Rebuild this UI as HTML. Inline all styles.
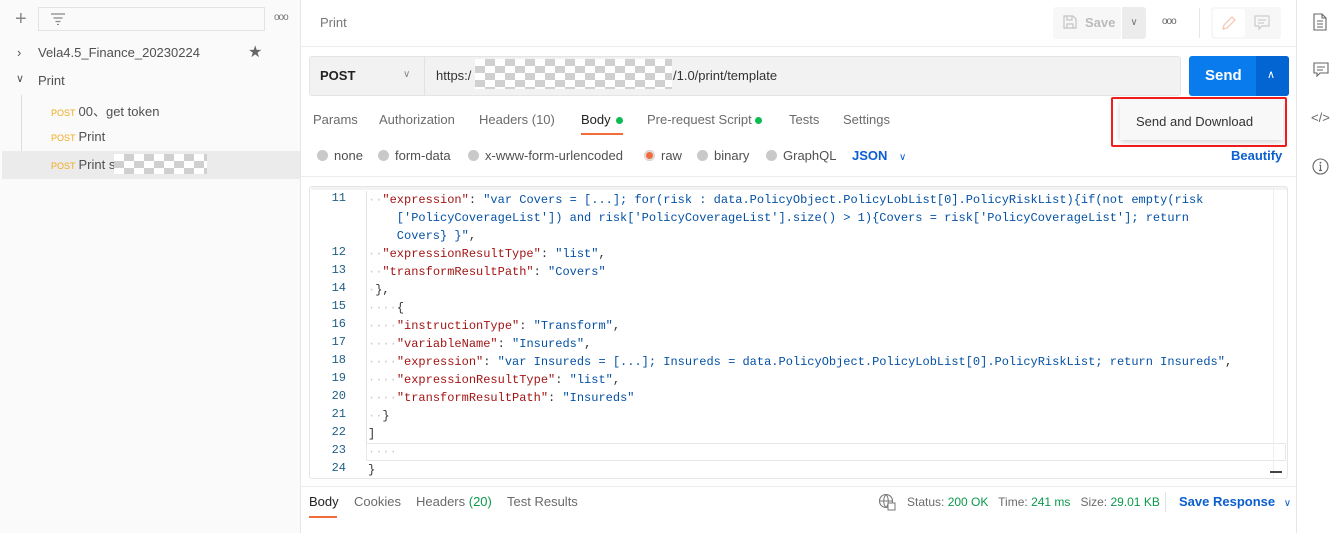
<!DOCTYPE html>
<html><head><meta charset="utf-8"><style>
*{box-sizing:border-box;margin:0;padding:0}
body{width:1332px;height:533px;overflow:hidden;background:#fff;font-family:"Liberation Sans",Arial,sans-serif;font-size:13px;color:#505050;position:relative}
.abs{position:absolute}
.chk{background-color:#fff;background-image:conic-gradient(#d0d0d0 25%,#fff 0 50%,#d0d0d0 0 75%,#fff 0);background-size:20px 14px}
.side{left:0;top:0;width:301px;height:533px;background:#fafafa;border-right:1px solid #e6e6e6}
.post{color:#f0ab1c;font-size:9px;margin-right:3px}
.code{font-family:"Liberation Mono",monospace;font-size:12px;line-height:18px;white-space:pre}
.ln{position:absolute;left:310px;width:36px;text-align:right;color:#1f5f86;font-family:"Liberation Mono",monospace;font-size:12px}
.k{color:#a31515}.s{color:#0451a5}.d{color:#c8c8c8}.p{color:#333}
.tab{position:absolute;top:112px;color:#6b6b6b}
.rad{position:absolute;top:148px;color:#505050}
.rad i{display:inline-block;width:11px;height:11px;border-radius:50%;background:#c9c9c9;margin-right:6px;vertical-align:-1px}
</style></head><body>
<div class="abs side"></div>
<div class="abs" style="left:15px;top:8px;font-size:20px;color:#888;font-weight:300">+</div>
<div class="abs" style="left:38px;top:7px;width:227px;height:24px;border:1px solid #e3e3e3;background:#fafafa"></div>
<svg class="abs" style="left:50px;top:13px" width="16" height="12"><path d="M1 1h14M3.5 5h9M5.5 8.5h5M7 11.5h2" stroke="#888" stroke-width="1.2"/></svg>
<div class="abs" style="left:274px;top:12px;font-size:10px;color:#777;letter-spacing:-1px">ooo</div>
<div class="abs" style="left:17px;top:45px;color:#555">›</div>
<div class="abs" style="left:38px;top:45px;color:#505050">Vela4.5_Finance_20230224</div>
<div class="abs" style="left:248px;top:42px;color:#666;font-size:16px">★</div>
<div class="abs" style="left:16px;top:72px;color:#555;font-size:11px">∨</div>
<div class="abs" style="left:38px;top:73px">Print</div>
<div class="abs" style="left:21px;top:95px;width:1px;height:84px;background:#ddd"></div>
<div class="abs" style="left:51px;top:101px"><span class="post">POST</span>00、get token</div>
<div class="abs" style="left:51px;top:129px"><span class="post">POST</span>Print</div>
<div class="abs" style="left:2px;top:151px;width:298px;height:28px;background:#ebebeb"></div>
<div class="abs" style="left:51px;top:157px"><span class="post">POST</span>Print s</div>
<div class="abs chk" style="left:114px;top:154px;width:93px;height:20px"></div>

<div class="abs" style="left:320px;top:15px;color:#777">Print</div>
<div class="abs" style="left:301px;top:46px;width:995px;height:1px;background:#ececec"></div>
<div class="abs" style="left:1053px;top:7px;width:68px;height:32px;background:#f7f7f7;border-radius:3px;color:#bbb;font-weight:bold;padding:8px 0 0 32px">Save</div>
<svg class="abs" style="left:1062px;top:14px" width="16" height="16"><path d="M2 2h9l3 3v9H2z M5 2v4h5V2 M5 14v-4h6v4" fill="none" stroke="#c4c4c4" stroke-width="1.2"/></svg>
<div class="abs" style="left:1122px;top:7px;width:24px;height:32px;background:#ececec;border-radius:0 3px 3px 0;color:#777;font-size:10px;text-align:center;padding-top:10px">∨</div>
<div class="abs" style="left:1162px;top:16px;font-size:10px;color:#666;letter-spacing:-1px">ooo</div>
<div class="abs" style="left:1199px;top:8px;width:1px;height:30px;background:#e6e6e6"></div>
<div class="abs" style="left:1211px;top:7px;width:70px;height:32px;background:#f7f7f7;border-radius:3px"></div>
<div class="abs" style="left:1213px;top:9px;width:32px;height:28px;background:#fff;border-radius:3px"></div>
<svg class="abs" style="left:1220px;top:14px" width="18" height="18"><path d="M3 15l1-4 8-8 3 3-8 8z" fill="none" stroke="#f5c4b0" stroke-width="1.2"/></svg>
<svg class="abs" style="left:1253px;top:14px" width="18" height="18"><path d="M2 2h14v10H9l-3 3v-3H2z M5 6h8M5 9h6" fill="none" stroke="#ccc" stroke-width="1.2"/></svg>

<div class="abs" style="left:309px;top:56px;width:872px;height:40px;background:#f2f2f2;border:1px solid #e5e5e5;border-radius:3px"></div>
<div class="abs" style="left:424px;top:57px;width:1px;height:38px;background:#e2e2e2"></div>
<div class="abs" style="left:320px;top:68px;color:#222;font-weight:bold">POST</div>
<div class="abs" style="left:403px;top:69px;color:#888;font-size:10px">∨</div>
<div class="abs" style="left:436px;top:68px;color:#333">https:/</div>
<div class="abs chk" style="left:475px;top:59px;width:197px;height:30px"></div>
<div class="abs" style="left:673px;top:68px;color:#333">/1.0/print/template</div>
<div class="abs" style="left:1189px;top:56px;width:100px;height:40px;background:#097bed;border-radius:3px"></div>
<div class="abs" style="left:1256px;top:56px;width:33px;height:40px;background:#0265d2;border-radius:0 3px 3px 0"></div>
<div class="abs" style="left:1205px;top:67px;color:#fff;font-weight:bold;font-size:15px">Send</div>
<div class="abs" style="left:1267px;top:68px;color:#fff;font-size:11px">∧</div>

<div class="abs" style="left:1111px;top:97px;width:176px;height:50px;border:2px solid #f31d1d;border-radius:2px"></div>
<div class="abs" style="left:1120px;top:100px;width:163px;height:40px;background:#f8f8f8;box-shadow:0 2px 6px rgba(0,0,0,.18)"></div>
<div class="abs" style="left:1136px;top:114px;color:#333">Send and Download</div>

<div class="tab" style="left:313px">Params</div>
<div class="tab" style="left:379px">Authorization</div>
<div class="tab" style="left:479px">Headers (10)</div>
<div class="tab" style="left:581px;color:#222">Body <span style="display:inline-block;width:7px;height:7px;border-radius:50%;background:#0cbb52;margin-left:2px"></span></div>
<div class="abs" style="left:581px;top:133px;width:42px;height:2px;background:#f26b3a"></div>
<div class="tab" style="left:647px">Pre-request Script <span style="display:inline-block;width:7px;height:7px;border-radius:50%;background:#0cbb52"></span></div>
<div class="tab" style="left:789px">Tests</div>
<div class="tab" style="left:843px">Settings</div>

<div class="rad" style="left:317px"><i></i>none</div>
<div class="rad" style="left:378px"><i></i>form-data</div>
<div class="rad" style="left:468px"><i></i>x-www-form-urlencoded</div>
<div class="rad" style="left:644px"><i style="background:#f26b3a;box-shadow:0 0 0 2px #ddd inset"></i>raw</div>
<div class="rad" style="left:697px"><i></i>binary</div>
<div class="rad" style="left:766px"><i></i>GraphQL</div>
<div class="rad" style="left:852px;color:#0b5fcf;font-weight:bold">JSON <span style="font-weight:normal;font-size:10px;margin-left:8px">∨</span></div>
<div class="rad" style="left:1231px;color:#0b5fcf;font-weight:bold">Beautify</div>

<div class="abs" style="left:301px;top:176px;width:995px;height:1px;background:#ececec"></div>
<div class="abs" style="left:309px;top:186px;width:979px;height:293px;border:1px solid #e6e6e6;border-radius:3px;overflow:hidden">
<div class="abs" style="left:1px;top:0;width:977px;height:3px;background:#f3f3f3"></div>
<div class="abs" style="left:56px;top:256px;width:920px;height:18px;border:1px solid #e8e8e8"></div>
<div class="abs" style="left:963px;top:0;width:1px;height:293px;background:#eee"></div>
<div class="abs" style="left:960px;top:284px;width:12px;height:2px;background:#444"></div>
</div>
<div class="abs" style="left:301px;top:486px;width:995px;height:1px;background:#ececec"></div>

<div class="ln" style="top:191px">11</div>
<div class="ln" style="top:245px">12</div>
<div class="ln" style="top:263px">13</div>
<div class="ln" style="top:281px">14</div>
<div class="ln" style="top:299px">15</div>
<div class="ln" style="top:317px">16</div>
<div class="ln" style="top:335px">17</div>
<div class="ln" style="top:353px">18</div>
<div class="ln" style="top:371px">19</div>
<div class="ln" style="top:389px">20</div>
<div class="ln" style="top:407px">21</div>
<div class="ln" style="top:425px">22</div>
<div class="ln" style="top:443px">23</div>
<div class="ln" style="top:461px">24</div>
<div class="abs" style="left:366px;top:191px;width:1px;height:252px;background:#e2e2e2"></div>

<div class="abs code" style="left:368px;top:191px"><span class="d">··</span><span class="k">"expression"</span><span class="p">: </span><span class="s">"var Covers = [...]; for(risk : data.PolicyObject.PolicyLobList[0].PolicyRiskList){if(not empty(risk</span>
<span class="s">    ['PolicyCoverageList']) and risk['PolicyCoverageList'].size() &gt; 1){Covers = risk['PolicyCoverageList']; return </span>
<span class="s">    Covers} }"</span><span class="p">,</span>
<span class="d">··</span><span class="k">"expressionResultType"</span><span class="p">: </span><span class="s">"list"</span><span class="p">,</span>
<span class="d">··</span><span class="k">"transformResultPath"</span><span class="p">: </span><span class="s">"Covers"</span>
<span class="d">·</span><span class="p">},</span>
<span class="d">····</span><span class="p">{</span>
<span class="d">····</span><span class="k">"instructionType"</span><span class="p">: </span><span class="s">"Transform"</span><span class="p">,</span>
<span class="d">····</span><span class="k">"variableName"</span><span class="p">: </span><span class="s">"Insureds"</span><span class="p">,</span>
<span class="d">····</span><span class="k">"expression"</span><span class="p">: </span><span class="s">"var Insureds = [...]; Insureds = data.PolicyObject.PolicyLobList[0].PolicyRiskList; return Insureds"</span><span class="p">,</span>
<span class="d">····</span><span class="k">"expressionResultType"</span><span class="p">: </span><span class="s">"list"</span><span class="p">,</span>
<span class="d">····</span><span class="k">"transformResultPath"</span><span class="p">: </span><span class="s">"Insureds"</span>
<span class="d">··</span><span class="p">}</span>
<span class="p">]</span>
<span class="d">····</span>
<span class="p">}</span></div>

<div class="abs" style="left:309px;top:494px;color:#222">Body</div>
<div class="abs" style="left:309px;top:516px;width:28px;height:2px;background:#f26b3a"></div>
<div class="abs" style="left:354px;top:494px;color:#6b6b6b">Cookies</div>
<div class="abs" style="left:416px;top:494px;color:#6b6b6b">Headers <span style="color:#0a9a4a">(20)</span></div>
<div class="abs" style="left:507px;top:494px;color:#6b6b6b">Test Results</div>
<svg class="abs" style="left:878px;top:493px" width="18" height="18"><circle cx="8" cy="8" r="6.5" fill="none" stroke="#777" stroke-width="1.1"/><path d="M1.5 8h13M8 1.5c-3 3-3 10 0 13M8 1.5c3 3 3 10 0 13" fill="none" stroke="#777"/><rect x="10" y="10" width="7" height="7" fill="#fff" stroke="#777"/></svg>
<div class="abs" style="left:907px;top:495px;font-size:12px;color:#6b6b6b">Status: <span style="color:#0a9a4a">200 OK</span>&nbsp;&nbsp; Time: <span style="color:#0a9a4a">241 ms</span>&nbsp;&nbsp; Size: <span style="color:#0a9a4a">29.01 KB</span></div>
<div class="abs" style="left:1165px;top:492px;width:1px;height:20px;background:#e2e2e2"></div>
<div class="abs" style="left:1179px;top:494px;color:#0b5fcf;font-weight:bold">Save Response <span style="font-weight:normal;font-size:10px;margin-left:5px">∨</span></div>

<div class="abs" style="left:1296px;top:0;width:1px;height:533px;background:#e6e6e6"></div>
<svg class="abs" style="left:1313px;top:13px" width="14" height="18"><path d="M1 1h8l4 4v12H1z M9 1v4h4 M4 8h6M4 11h6M4 14h6" fill="none" stroke="#666" stroke-width="1.1"/></svg>
<svg class="abs" style="left:1313px;top:62px" width="16" height="16"><path d="M1 1h14v10H7l-3 3v-3H1z M4 5h8M4 8h6" fill="none" stroke="#666" stroke-width="1.1"/></svg>
<div class="abs" style="left:1311px;top:110px;color:#666;font-size:13px">&lt;/&gt;</div>
<svg class="abs" style="left:1312px;top:158px" width="17" height="17"><circle cx="8.5" cy="8.5" r="7.5" fill="none" stroke="#666" stroke-width="1.1"/><path d="M8.5 7v5.5M7 12.5h3M7.5 7h1" stroke="#666" stroke-width="1.2"/><circle cx="8.5" cy="4.7" r=".9" fill="#666"/></svg>
</body></html>
